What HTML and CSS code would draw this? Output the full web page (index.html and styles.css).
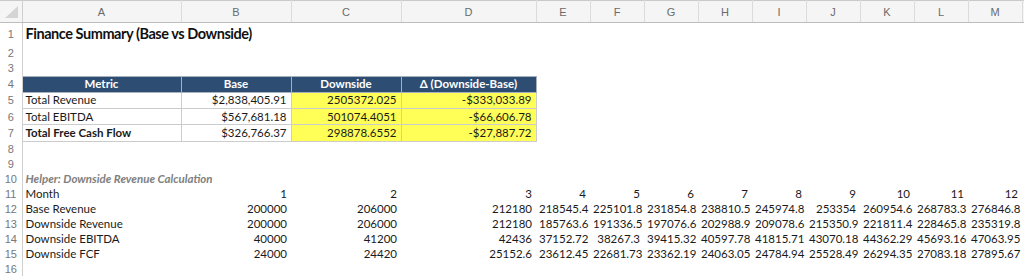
FILE: index.html
```html
<!DOCTYPE html>
<html lang="en">
  <head>
    <meta charset="UTF-8" />
    <title>Finance Summary</title>
    <link rel="stylesheet" href="styles.css">
  </head>
  <body>
    <table class="sheet">
      <colgroup>
        <col class="c-rh" />
        <col class="c-a" />
        <col class="c-b" />
        <col class="c-c" />
        <col class="c-d" />
        <col class="c-n" /><col class="c-n" /><col class="c-n" />
        <col class="c-n" /><col class="c-n" /><col class="c-n" />
        <col class="c-n" /><col class="c-n" /><col class="c-n" />
        <col />
      </colgroup>
      <thead>
        <tr class="col-head">
          <th class="corner">
            <svg width="16" height="14" viewBox="0 0 16 14"><polygon points="15,1 15,13 2,13" fill="#d4d4d4" /></svg>
          </th>
          <th>A</th><th>B</th><th>C</th><th>D</th><th>E</th><th>F</th><th>G</th>
          <th>H</th><th>I</th><th>J</th><th>K</th><th>L</th><th>M</th><th class="edge"></th>
        </tr>
      </thead>
      <tbody>
        <tr class="r-title">
          <td class="rh">1</td><td class="title">Finance Summary (Base vs Downside)</td>
          <td></td><td></td><td></td><td></td><td></td><td></td><td></td><td></td><td></td><td></td><td></td><td></td><td></td>
        </tr>
        <tr class="r-2">
          <td class="rh">2</td><td></td><td></td><td></td><td></td><td></td><td></td><td></td><td></td><td></td><td></td><td></td><td></td><td></td><td></td>
        </tr>
        <tr class="r-3">
          <td class="rh">3</td><td></td><td></td><td></td><td></td><td></td><td></td><td></td><td></td><td></td><td></td><td></td><td></td><td></td><td></td>
        </tr>
        <tr class="r-tbl">
          <td class="rh">4</td>
          <td class="hd">Metric</td><td class="hd">Base</td><td class="hd">Downside</td><td class="hd">Δ (Downside-Base)</td>
          <td></td><td></td><td></td><td></td><td></td><td></td><td></td><td></td><td></td><td></td>
        </tr>
        <tr class="r-tbl">
          <td class="rh">5</td>
          <td class="box">Total Revenue</td><td class="box num">$2,838,405.91</td>
          <td class="box num hl">2505372.025</td><td class="box num hl">-$333,033.89</td>
          <td></td><td></td><td></td><td></td><td></td><td></td><td></td><td></td><td></td><td></td>
        </tr>
        <tr class="r-tbl">
          <td class="rh">6</td>
          <td class="box">Total EBITDA</td><td class="box num">$567,681.18</td>
          <td class="box num hl">501074.4051</td><td class="box num hl">-$66,606.78</td>
          <td></td><td></td><td></td><td></td><td></td><td></td><td></td><td></td><td></td><td></td>
        </tr>
        <tr class="r-tbl">
          <td class="rh">7</td>
          <td class="box strong">Total Free Cash Flow</td><td class="box num">$326,766.37</td>
          <td class="box num hl">298878.6552</td><td class="box num hl">-$27,887.72</td>
          <td></td><td></td><td></td><td></td><td></td><td></td><td></td><td></td><td></td><td></td>
        </tr>
        <tr>
          <td class="rh">8</td><td></td><td></td><td></td><td></td><td></td><td></td><td></td><td></td><td></td><td></td><td></td><td></td><td></td><td></td>
        </tr>
        <tr>
          <td class="rh">9</td><td></td><td></td><td></td><td></td><td></td><td></td><td></td><td></td><td></td><td></td><td></td><td></td><td></td><td></td>
        </tr>
        <tr>
          <td class="rh">10</td><td class="note">Helper: Downside Revenue Calculation</td>
          <td></td><td></td><td></td><td></td><td></td><td></td><td></td><td></td><td></td><td></td><td></td><td></td><td></td>
        </tr>
        <tr>
          <td class="rh">11</td><td>Month</td>
          <td class="num">1</td><td class="num">2</td><td class="num">3</td><td class="num">4</td>
          <td class="num">5</td><td class="num">6</td><td class="num">7</td><td class="num">8</td>
          <td class="num">9</td><td class="num">10</td><td class="num">11</td><td class="num">12</td><td></td>
        </tr>
        <tr>
          <td class="rh">12</td><td>Base Revenue</td>
          <td class="num">200000</td><td class="num">206000</td><td class="num">212180</td><td class="num">218545.4</td>
          <td class="num">225101.8</td><td class="num">231854.8</td><td class="num">238810.5</td><td class="num">245974.8</td>
          <td class="num">253354</td><td class="num">260954.6</td><td class="num">268783.3</td><td class="num">276846.8</td><td></td>
        </tr>
        <tr>
          <td class="rh">13</td><td>Downside Revenue</td>
          <td class="num">200000</td><td class="num">206000</td><td class="num">212180</td><td class="num">185763.6</td>
          <td class="num">191336.5</td><td class="num">197076.6</td><td class="num">202988.9</td><td class="num">209078.6</td>
          <td class="num">215350.9</td><td class="num">221811.4</td><td class="num">228465.8</td><td class="num">235319.8</td><td></td>
        </tr>
        <tr>
          <td class="rh">14</td><td>Downside EBITDA</td>
          <td class="num">40000</td><td class="num">41200</td><td class="num">42436</td><td class="num">37152.72</td>
          <td class="num">38267.3</td><td class="num">39415.32</td><td class="num">40597.78</td><td class="num">41815.71</td>
          <td class="num">43070.18</td><td class="num">44362.29</td><td class="num">45693.16</td><td class="num">47063.95</td><td></td>
        </tr>
        <tr>
          <td class="rh">15</td><td>Downside FCF</td>
          <td class="num">24000</td><td class="num">24420</td><td class="num">25152.6</td><td class="num">23612.45</td>
          <td class="num">22681.73</td><td class="num">23362.19</td><td class="num">24063.05</td><td class="num">24784.94</td>
          <td class="num">25528.49</td><td class="num">26294.35</td><td class="num">27083.18</td><td class="num">27895.67</td><td></td>
        </tr>
        <tr>
          <td class="rh">16</td><td></td><td></td><td></td><td></td><td></td><td></td><td></td><td></td><td></td><td></td><td></td><td></td><td></td><td></td>
        </tr>
      </tbody>
    </table>
  </body>
</html>
```

FILE: styles.css
```css
body {
  margin: 0;
  padding: 0;
  background: #ffffff;
  font-family: "Lato", "Liberation Sans", sans-serif;
  color: #1a1a1a;
  overflow: hidden;
}

.sheet {
  border-collapse: collapse;
  table-layout: fixed;
  width: 1024px;
  border-top: 1px solid #c9c9c9;
}

.c-rh { width: 22px; }
.c-a { width: 159px; }
.c-b { width: 110px; }
.c-c { width: 110px; }
.c-d { width: 135px; }
.c-n { width: 54px; }

.sheet tr {
  height: 15px;
}

.sheet td {
  padding: 0 3px;
  font-size: 11.5px;
  white-space: nowrap;
  overflow: visible;
  vertical-align: middle;
  line-height: 12px;
}

/* column letters */
.col-head th {
  height: 21px;
  padding: 0;
  background: #f5f5f5;
  border-right: 1px solid #dcdcdc;
  border-bottom: 1px solid #bdbdbd;
  font-family: "Liberation Sans", sans-serif;
  font-weight: normal;
  font-size: 11px;
  color: #6a6a6a;
  text-align: center;
}

.col-head th.corner {
  border-right: 1px solid #cfcfcf;
  text-align: left;
}

.corner svg {
  display: block;
  margin-left: 3px;
}

.col-head th.edge {
  border-right: none;
}

/* row numbers */
.sheet td.rh {
  padding: 0;
  border-right: 1px solid #cfcfcf;
  font-family: "Liberation Sans", sans-serif;
  font-size: 11px;
  color: #777777;
  text-align: center;
}

.sheet tr.r-title { height: 22px; }
.sheet tr.r-2 { height: 16px; }
.sheet tr.r-3 { height: 15.5px; }
.sheet tr.r-tbl { height: 16.3px; }

.sheet td.title {
  font-size: 14.5px;
  font-weight: bold;
  letter-spacing: -0.45px;
  color: #111111;
}

.sheet td.hd {
  background: #2e4d73;
  color: #ffffff;
  font-weight: bold;
  text-align: center;
  border: 1px solid #a7b0bd;
}

.sheet td.box {
  border: 1px solid #cccccc;
}

.sheet td.hl {
  background: #ffff57;
}

.sheet td.num {
  text-align: right;
  padding-right: 4px;
}

.sheet td.strong {
  font-weight: bold;
}

.sheet td.note {
  font-weight: bold;
  font-style: italic;
  color: #808080;
}
```
